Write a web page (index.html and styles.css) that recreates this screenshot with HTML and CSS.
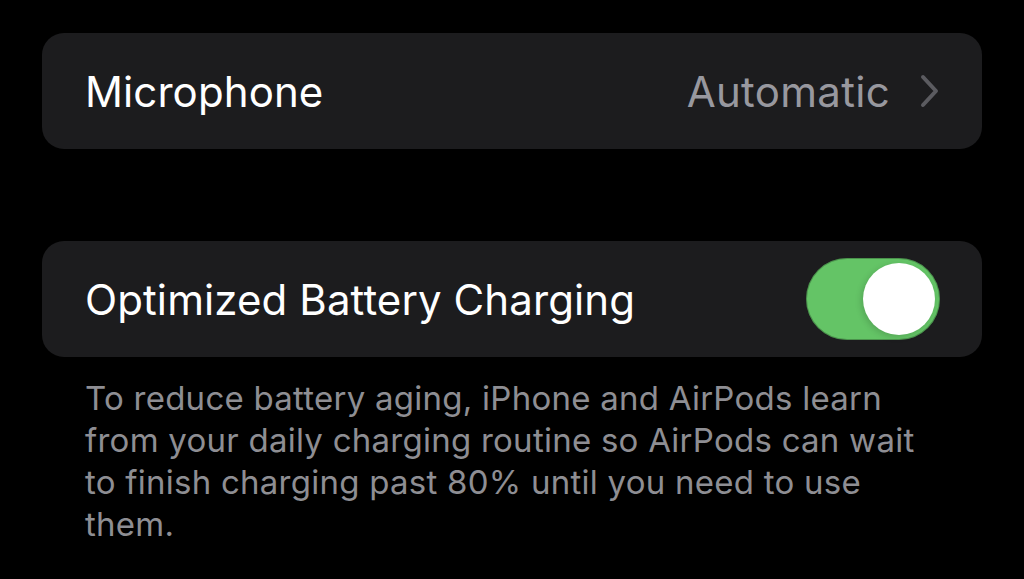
FILE: index.html
```html
<!DOCTYPE html>
<html lang="en">
<head>
<meta charset="UTF-8" />
<meta name="viewport" content="width=device-width, initial-scale=1" />
<title>AirPods Settings</title>
<link rel="stylesheet" href="styles.css">
</head>
<body>
  <div class="settings">
    <div class="group">
      <div class="row">
        <span class="row-label">Microphone</span>
        <span class="row-value">Automatic</span>
        <svg class="chevron" width="20" height="34" viewBox="0 0 20 34" aria-hidden="true">
          <path d="M3 3 L16 17 L3 31" fill="none" stroke="#5b5b60" stroke-width="4" stroke-linecap="round" stroke-linejoin="round"/>
        </svg>
      </div>
    </div>

    <div class="section">
      <div class="group">
        <div class="row">
          <span class="row-label">Optimized Battery Charging</span>
          <div class="switch is-on" role="switch" aria-checked="true">
            <div class="switch-knob"></div>
          </div>
        </div>
      </div>
      <p class="footer">To reduce battery aging, iPhone and AirPods learn from your daily charging routine so AirPods can wait to finish charging past 80% until you need to use them.</p>
    </div>
  </div>
</body>
</html>
```

FILE: styles.css
```css
body {
  margin: 0;
  background: #000;
  font-family: "Inter", "Noto Sans", sans-serif;
  -webkit-font-smoothing: antialiased;
}

.settings {
  padding: 33px 42px 0;
  display: flex;
  flex-direction: column;
  gap: 92px;
}

/* Cartão arredondado */
.group {
  background: #1c1c1e;
  border-radius: 22px;
}

.row {
  height: 116px;
  display: flex;
  align-items: center;
  padding: 0 42px 0 43px;
  gap: 14px;
}

.row-label {
  flex: 1;
  color: #fff;
  font-size: 42px;
  letter-spacing: 0.1px;
}

.row-value {
  color: #98989f;
  font-size: 42px;
  letter-spacing: 0.3px;
  margin-right: 16px;
}

.chevron {
  display: block;
}

/* Toggle estilo iOS */
.switch {
  width: 134px;
  height: 82px;
  border-radius: 41px;
  background: #64c466;
  box-shadow: inset 0 0 0 1px rgba(0,0,0,0.25);
  position: relative;
}

.switch-knob {
  position: absolute;
  top: 5px;
  right: 5px;
  width: 72px;
  height: 72px;
  border-radius: 50%;
  background: #fff;
  box-shadow: -2px 2px 6px rgba(0,0,0,0.15);
}

.footer {
  margin: 20px 0 0;
  padding: 0 50px 0 43px;
  color: #8e8e93;
  font-size: 33px;
  letter-spacing: 0.25px;
  line-height: 42px;
}
```
